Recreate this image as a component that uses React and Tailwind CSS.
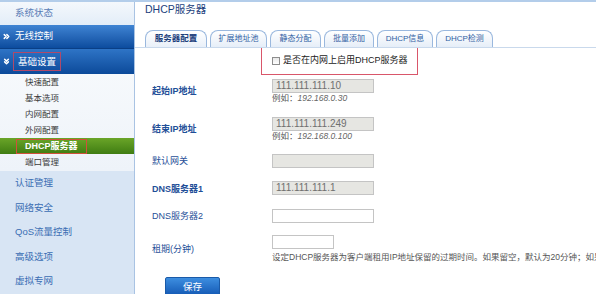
import React from "react";
import { ChevronsRight, ChevronsDown } from "lucide-react";

const subItems = ["快速配置", "基本选项", "内网配置", "外网配置", "DHCP服务器", "端口管理"];
const mainItems = ["认证管理", "网络安全", "QoS流量控制", "高级选项", "虚拟专网"];
const tabs = [
  { name: "服务器配置", w: 62, active: true },
  { name: "扩展地址池", w: 57 },
  { name: "静态分配", w: 51 },
  { name: "批量添加", w: 50 },
  { name: "DHCP信息", w: 56 },
  { name: "DHCP检测", w: 57 },
];

const Field = ({ label, bold, value, gray, width = "w-[102px]", hint, top, labelTop }) => (
  <div className="flex" style={{ marginTop: top }}>
    <div
      className={`w-[127px] shrink-0 pl-[7px] text-[9px] leading-[12px] text-[#1f4f98] ${bold ? "font-bold" : ""}`}
      style={{ paddingTop: labelTop }}
    >
      {label}
    </div>
    <div className="flex flex-col">
      <div
        className={`${width} h-[14px] border border-[#c4c4c4] ${gray ? "bg-[#e6e6e2]" : "bg-white"} text-[10px] leading-[12px] pl-[3px] text-[#6f6f6f]`}
      >
        {value}
      </div>
      {hint && (
        <div className="text-[8.5px] leading-[11px] text-[#555] whitespace-nowrap">
          例如：<span className="italic text-[#666]">{hint}</span>
        </div>
      )}
    </div>
  </div>
);

const App = () => {
  return (
    <div className="w-[596px] h-[294px] overflow-hidden flex bg-white border-t-2 border-[#b3cdea] font-['Liberation_Sans','Noto_Sans_CJK_SC',sans-serif]">
      {/* sidebar */}
      <div className="w-[135px] shrink-0 flex flex-col bg-[#d8e5f4] border-r border-[#a9c3e3]">
        <div className="h-[23px] flex items-center pl-[15px] text-[9.5px] text-[#5a7db6] bg-gradient-to-b from-[#f4f8fc] to-[#e3edf8]">
          系统状态
        </div>
        <div className="h-[24px] flex items-center pl-[2px] gap-[4px] text-[9.5px] text-white bg-gradient-to-b from-[#3f84d3] to-[#0c4c9e] border-b border-[#0a3f86]">
          <ChevronsRight size={9} strokeWidth={4} />
          <span>无线控制</span>
        </div>
        <div className="h-[25px] flex items-center pl-[2px] gap-[2px] text-[9.5px] text-white bg-gradient-to-b from-[#2e74c6] to-[#0b4a9a]">
          <ChevronsDown size={9} strokeWidth={4} />
          <span className="border border-[#b04a6a] px-[4px] leading-[17px]">基础设置</span>
        </div>
        <div className="flex flex-col pb-[1px] bg-gradient-to-b from-[#f6f9fc] to-[#eef3f9]">
          {subItems.map((s) =>
            s === "DHCP服务器" ? (
              <div
                key={s}
                className="h-[16px] flex items-center pl-[16px] bg-gradient-to-b from-[#6aa528] to-[#3f7d12]"
              >
                <span className="border border-[#d0503a] px-[8px] text-[9px] leading-[13px] font-bold text-white whitespace-nowrap">
                  {s}
                </span>
              </div>
            ) : (
              <div key={s} className="h-[16px] flex items-center pl-[25px] text-[8.5px] text-[#3b3b3b]">
                {s}
              </div>
            ),
          )}
        </div>
        <div className="flex flex-col">
          {mainItems.map((m) => (
            <div key={m} className="h-[24.5px] flex items-center pl-[15px] text-[9.5px] text-[#3a6db3]">
              {m}
            </div>
          ))}
        </div>
      </div>

      {/* content */}
      <div className="flex-1 flex flex-col pl-[10px] min-w-0">
        <div className="h-[20px] flex items-end text-[10.5px] text-[#1c3f7c] pb-[1px]">DHCP服务器</div>
        <div className="h-px bg-[#dfe7ef] mt-[3px] -ml-[10px]" />
        <div className="flex items-end gap-[3px] mt-[8px] border-b border-[#c9d9ec] -ml-[10px] pl-[10px]">
          {tabs.map((t) => (
            <div
              key={t.name}
              style={{ width: t.w }}
              className={`h-[17px] flex items-center justify-center rounded-t-[8px] border border-b-0 border-[#9ab8de] whitespace-nowrap ${
                t.active
                  ? "text-[8.5px] font-bold text-[#1c3f7c] bg-gradient-to-b from-[#ffffff] to-[#e9f0f9]"
                  : "text-[8px] text-[#2f5ea3] bg-gradient-to-b from-[#ffffff] to-[#e6eef8]"
              }`}
            >
              {t.name}
            </div>
          ))}
        </div>
        <div className="flex">
          <div className="ml-[116px] w-[157px] h-[27px] shrink-0 border border-t-0 border-[#d9566a] flex items-center pl-[10px] gap-[3px]">
            <div className="w-[8px] h-[8px] border border-[#8d8d8d] bg-gradient-to-b from-[#e8e8e8] to-[#ffffff]" />
            <span className="text-[9px] text-[#222] whitespace-nowrap">是否在内网上启用DHCP服务器</span>
          </div>
        </div>

        <Field label="起始IP地址" bold value="111.111.111.10" gray hint="192.168.0.30" top={4} labelTop={6} />
        <Field label="结束IP地址" bold value="111.111.111.249" gray hint="192.168.0.100" top={13} labelTop={6} />
        <Field label="默认网关" gray top={12} labelTop={1} />
        <Field label="DNS服务器1" bold value="111.111.111.1" gray top={13} labelTop={2} />
        <Field label="DNS服务器2" top={14} labelTop={1} />
        <div className="flex mt-[12px]">
          <div className="w-[127px] shrink-0 pl-[7px] pt-[8px] text-[9px] leading-[12px] text-[#1f4f98]">租期(分钟)</div>
          <div className="flex flex-col">
            <div className="w-[62px] h-[14px] border border-[#c4c4c4] bg-white" />
            <div className="text-[8.5px] leading-[11px] mt-[3px] text-[#555] whitespace-nowrap">
              设定DHCP服务器为客户端租用IP地址保留的过期时间。如果留空，默认为20分钟；如果为-1，则为永久租期。
            </div>
          </div>
        </div>
        <div className="ml-[20px] mt-[10px]">
          <button className="w-[55px] h-[20px] rounded-[2px] bg-gradient-to-b from-[#3d8ee0] to-[#1257b3] border border-[#1a5aa8] text-white text-[9.5px]">
            保存
          </button>
        </div>
      </div>
    </div>
  );
};

export default App;
